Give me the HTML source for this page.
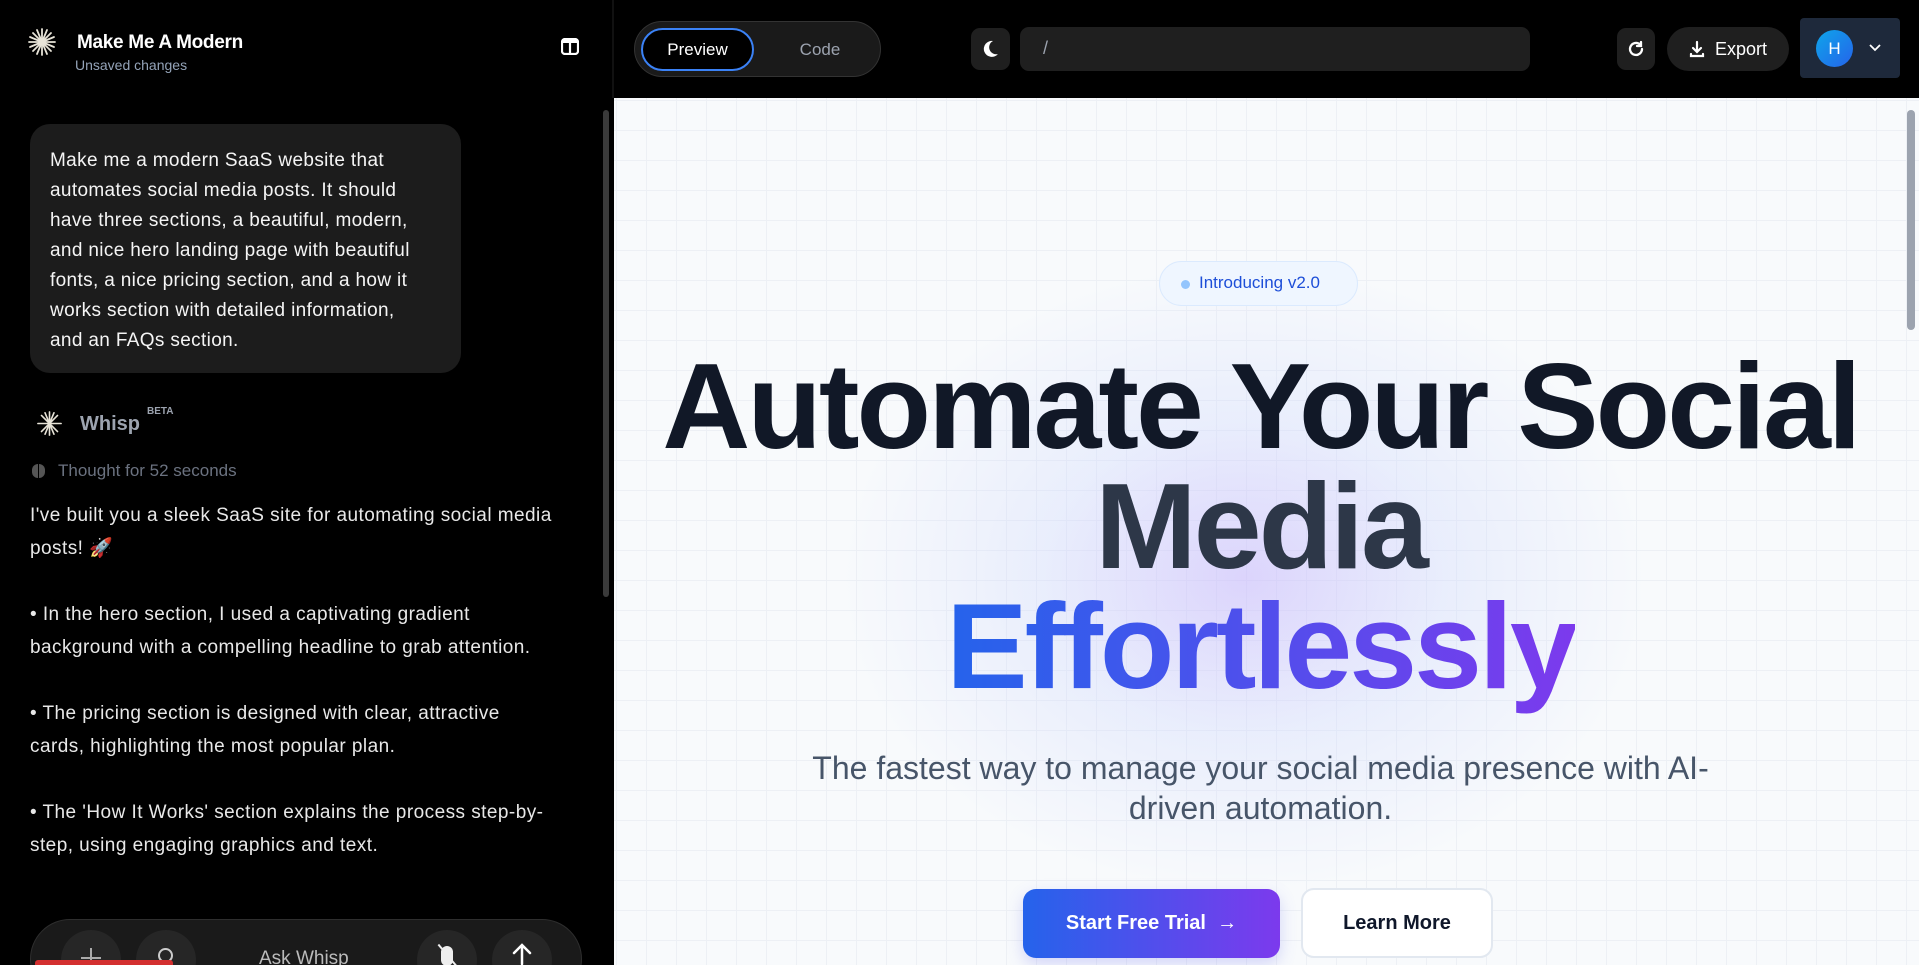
<!DOCTYPE html>
<html><head><meta charset="utf-8"><style>
*{box-sizing:border-box;margin:0;padding:0}
html,body{width:1919px;height:965px;overflow:hidden}
body{background:#000;font-family:"Liberation Sans",sans-serif;position:relative}
.abs{position:absolute}
.left{left:0;top:0;width:614px;height:965px;background:#000;overflow:hidden}
.t1{left:77px;top:32px;color:#fff;font-size:19px;font-weight:700;letter-spacing:-0.3px}
.t2{left:75px;top:57px;color:#94a3b8;font-size:14px}
.bubble{left:30px;top:124px;width:431px;height:249px;background:#1c1c1c;border-radius:20px;padding:22px 38px 0 20px;color:#f5f5f5;font-size:19px;letter-spacing:0.35px;line-height:30px}
.reply{left:30px;top:499px;width:526px;color:#e8e8e8;font-size:19px;letter-spacing:0.45px;line-height:33px;white-space:pre-line}
.bar{left:30px;top:919px;width:552px;height:80px;background:#1a1a1a;border:1px solid #2e2e2e;border-radius:40px}
.circ{width:60px;height:60px;border-radius:50%;background:#262626;top:930px}
.top{left:614px;top:0;width:1305px;height:98px;background:#000}
.btn{background:#1f1f1f;border-radius:9px}
.preview{left:614px;top:98px;width:1305px;height:867px;background-color:#f8fafc;
background-image:linear-gradient(#edf0f5 1px,transparent 1px),linear-gradient(90deg,#edf0f5 1px,transparent 1px);background-size:30px 30px;background-position:2px 2px;overflow:hidden}
h1{position:absolute;left:0;width:1293px;text-align:center;font-size:122px;font-weight:700;letter-spacing:-3px;line-height:120px;top:248px}
</style></head><body>
<div class="abs left">
 <svg class="abs" style="left:28px;top:28px" width="28" height="28" viewBox="0 0 28 28" stroke="#e8e4d8" stroke-width="1.8" stroke-linecap="round"><g transform="translate(14 14)"><line x1="0" y1="-13" x2="0" y2="13"/><line x1="-13" y1="0" x2="13" y2="0"/><line x1="-9" y1="-9" x2="9" y2="9"/><line x1="-9" y1="9" x2="9" y2="-9"/><line x1="-5" y1="-12" x2="5" y2="12"/><line x1="5" y1="-12" x2="-5" y2="12"/><line x1="-12" y1="-5" x2="12" y2="5"/><line x1="-12" y1="5" x2="12" y2="-5"/></g></svg>
 <div class="abs t1">Make Me A Modern</div>
 <div class="abs t2">Unsaved changes</div>
 <svg class="abs" style="left:561px;top:38px" width="18" height="17" viewBox="0 0 18 17"><rect x="1" y="1" width="16" height="15" rx="3" fill="none" stroke="#fff" stroke-width="2.2"/><rect x="1" y="1" width="16" height="4" fill="#fff"/><line x1="9" y1="3" x2="9" y2="16" stroke="#fff" stroke-width="2.2"/></svg>
 <div class="abs" style="left:603px;top:110px;width:6px;height:487px;background:#3a3a3a;border-radius:3px"></div>
 <div class="abs bubble">Make me a modern SaaS website that automates social media posts. It should have three sections, a beautiful, modern, and nice hero landing page with beautiful fonts, a nice pricing section, and a how it works section with detailed information, and an FAQs section.</div>
 <svg class="abs" style="left:37px;top:411px" width="25" height="25" viewBox="0 0 28 28" stroke="#e8e4d8" stroke-width="1.8" stroke-linecap="round"><g transform="translate(14 14)"><line x1="0" y1="-13" x2="0" y2="13"/><line x1="-13" y1="0" x2="13" y2="0"/><line x1="-9" y1="-9" x2="9" y2="9"/><line x1="-9" y1="9" x2="9" y2="-9"/><line x1="-5" y1="-12" x2="5" y2="12"/><line x1="5" y1="-12" x2="-5" y2="12"/></g></svg>
 <div class="abs" style="left:80px;top:413px;color:#9ca3af;font-size:20px;font-weight:700">Whisp</div>
 <div class="abs" style="left:147px;top:406px;color:#9ca3af;font-size:10px;font-weight:700">BETA</div>
 <div class="abs" style="left:32px;top:464px;width:13px;height:14px;border-radius:6px;background:#555"></div>
 <div class="abs" style="left:38px;top:464px;width:1px;height:14px;background:#000"></div>
 <div class="abs" style="left:58px;top:461px;color:#6b7280;font-size:17px">Thought for 52 seconds</div>
 <div class="abs reply">I've built you a sleek SaaS site for automating social media posts! 🚀

• In the hero section, I used a captivating gradient background with a compelling headline to grab attention.

• The pricing section is designed with clear, attractive cards, highlighting the most popular plan.

• The 'How It Works' section explains the process step-by-step, using engaging graphics and text.</div>
 <div class="abs bar"></div>
 <div class="abs circ" style="left:61px"></div>
 <div class="abs circ" style="left:136px"></div>
 <div class="abs circ" style="left:417px"></div>
 <div class="abs circ" style="left:492px"></div>
 <div class="abs" style="left:90px;top:948px;width:2px;height:20px;background:#aaa"></div>
 <div class="abs" style="left:81px;top:957px;width:20px;height:2px;background:#aaa"></div>
 <div class="abs" style="left:158px;top:948px;width:15px;height:15px;border:2px solid #ccc;border-radius:50%"></div>
 <div class="abs" style="left:259px;top:948px;color:#bbb;font-size:19px">Ask Whisp</div>
 <div class="abs" style="left:441px;top:946px;width:12px;height:20px;border-radius:6px;background:#eee"></div>
 <div class="abs" style="left:447px;top:941px;width:2px;height:30px;background:#eee;transform:rotate(-40deg)"></div>
 <svg class="abs" style="left:510px;top:942px" width="24" height="24" viewBox="0 0 24 24" stroke="#fff" stroke-width="2.5" fill="none" stroke-linecap="round"><path d="M12 22V3M4 11l8-8 8 8"/></svg>
 <div class="abs" style="left:35px;top:960px;width:138px;height:5px;background:#d32f2f;border-radius:3px 3px 0 0"></div>
</div>
<div class="abs" style="left:612px;top:0;width:2px;height:98px;background:#111"></div>
<div class="abs top">
 <div class="abs" style="left:20px;top:21px;width:247px;height:56px;background:#1a1a1a;border:1px solid #333;border-radius:28px"></div>
 <div class="abs" style="left:27px;top:28px;width:113px;height:43px;background:#000;border:2px solid #3b82f6;border-radius:22px;color:#fff;font-size:17px;text-align:center;line-height:39px">Preview</div>
 <div class="abs" style="left:180px;top:28px;width:52px;color:#9ca3af;font-size:17px;line-height:43px;text-align:center">Code</div>
 <div class="abs btn" style="left:357px;top:28px;width:39px;height:42px"></div>
 <svg class="abs" style="left:366px;top:39px" width="20" height="20" viewBox="0 0 20 20"><path d="M13 2a8 8 0 1 0 5 13A7 7 0 0 1 13 2z" fill="#fff"/></svg>
 <div class="abs btn" style="left:406px;top:27px;width:510px;height:44px"></div>
 <div class="abs" style="left:429px;top:38px;color:#9ca3af;font-size:18px">/</div>
 <div class="abs btn" style="left:1003px;top:28px;width:38px;height:42px"></div>
 <svg class="abs" style="left:1012px;top:39px" width="20" height="20" viewBox="0 0 20 20" fill="none" stroke="#fff" stroke-width="2.3" stroke-linecap="round"><path d="M16 10a6 6 0 1 1-2-4.5"/><path d="M15 3v4h-4"/></svg>
 <div class="abs btn" style="left:1053px;top:27px;width:122px;height:44px;border-radius:22px"></div>
 <svg class="abs" style="left:1074px;top:40px" width="18" height="18" viewBox="0 0 18 18" fill="none" stroke="#fff" stroke-width="2.2" stroke-linecap="round"><path d="M9 2v9M5 8l4 4 4-4M3 14v2h12v-2"/></svg>
 <div class="abs" style="left:1101px;top:39px;color:#fff;font-size:18px">Export</div>
 <div class="abs" style="left:1186px;top:18px;width:100px;height:60px;background:#1e293b;border-radius:4px"></div>
 <div class="abs" style="left:1202px;top:30px;width:37px;height:37px;border-radius:50%;background:linear-gradient(135deg,#0ea5e9,#2563eb);color:#fff;font-size:17px;text-align:center;line-height:37px">H</div>
 <svg class="abs" style="left:1254px;top:43px" width="14" height="10" viewBox="0 0 14 10" fill="none" stroke="#fff" stroke-width="1.8"><path d="M2 2l5 5 5-5"/></svg>
</div>
<div class="abs preview">
 <div class="abs" style="left:180px;top:130px;width:900px;height:700px;background:radial-gradient(ellipse 45% 45% at 50% 50%,rgba(196,181,253,0.55),rgba(199,210,254,0.3) 50%,rgba(248,250,252,0) 100%)"></div>
 <div class="abs" style="left:545px;top:163px;width:199px;height:45px;border-radius:23px;background:#eff6ff;border:1px solid #dbeafe"></div>
 <div class="abs" style="left:567px;top:182px;width:9px;height:9px;border-radius:50%;background:#93c5fd"></div>
 <div class="abs" style="left:585px;top:175px;color:#1d4ed8;font-size:17px">Introducing v2.0</div>
 <h1><span style="color:#111827">Automate Your Social</span><br><span style="color:#2d3748">Media</span><br><span style="background:linear-gradient(90deg,#2563eb,#7c3aed);-webkit-background-clip:text;background-clip:text;color:transparent">Effortlessly</span></h1>
 <div class="abs" style="left:0;width:1293px;top:650px;text-align:center;color:#475569;font-size:32px;line-height:40px">The fastest way to manage your social media presence with AI-<br>driven automation.</div>
 <div class="abs" style="left:409px;top:791px;width:257px;height:69px;border-radius:13px;background:linear-gradient(90deg,#2563eb,#7c3aed);color:#fff;font-size:20px;font-weight:700;text-align:center;line-height:69px;box-shadow:0 6px 16px rgba(99,102,241,0.25)">Start Free Trial &nbsp;→</div>
 <div class="abs" style="left:687px;top:790px;width:192px;height:70px;border-radius:13px;background:#fff;border:2px solid #e2e8f0;color:#0f172a;font-size:20px;font-weight:700;text-align:center;line-height:66px">Learn More</div>
 <div class="abs" style="left:1293px;top:12px;width:8px;height:220px;background:#9ca3af;border-radius:4px"></div>
</div>
</body></html>
